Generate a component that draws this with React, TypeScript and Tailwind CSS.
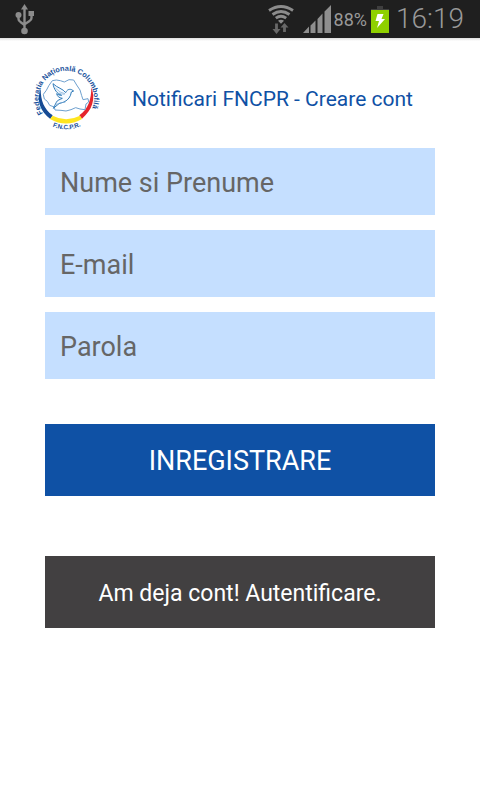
import React from "react";

function UsbIcon() {
  return (
    <svg width="20" height="32" viewBox="0 0 20 32" fill="none" stroke="#8c8c8c" strokeWidth="2.400" aria-hidden="true">
      <path d="M9.500 5v22M3.500 13v3q0 2 2 3l4 3M16.500 11v4q0 2-2 3l-4.500 3" />
      <path d="M9.500 1l3.500 5.500H6z" fill="#8c8c8c" stroke="none" />
      <circle cx="3.500" cy="12" r="3" fill="#8c8c8c" stroke="none" />
      <rect x="13.500" y="8" width="5.500" height="5" fill="#8c8c8c" stroke="none" />
      <circle cx="9.500" cy="28" r="3.300" fill="#8c8c8c" stroke="none" />
    </svg>
  );
}

function WifiIcon() {
  return (
    <svg width="28" height="32" viewBox="0 0 28 32" fill="none" stroke="#8c8c8c" strokeWidth="2.800" aria-hidden="true">
      <path d="M2 7.500q12-8 24 0M5.500 11.500q8.500-6 17 0M8.800 15.200q5.200-3.800 10.400 0" />
      <path d="M11 17.700q3-2 6 0l-3 3z" fill="#8c8c8c" stroke="none" />
      <path d="M9.500 20.500V27M17.500 29v-6" stroke="#686868" strokeWidth="2.800" />
      <path d="M5.500 26h8l-4 5zM13.500 24.500h8l-4-4.500z" fill="#686868" stroke="none" />
    </svg>
  );
}

function SignalIcon() {
  return (
    <svg width="28" height="28" viewBox="0 0 28 28" fill="#8e8e8e" aria-hidden="true">
      <path d="M0 28L6 21.500V28zM7.500 20.500l5-5V28h-5zM14.500 14l5-5.500V28h-5zM21.500 6.500L28 0v28h-6.500z" />
    </svg>
  );
}

function BatteryIcon() {
  return (
    <svg width="18" height="27" viewBox="0 0 18 27" aria-hidden="true">
      <path d="M6 0h6v3h6v2H0V3h6z" fill="#3f3f3f" />
      <path d="M0 4h18v23H0z" fill="#8fd000" />
      <path d="M6.500 8h6l-2 5H14l-8 9 2-7H4.500z" fill="#fff" />
    </svg>
  );
}

function Logo() {
  return (
    <svg width="84" height="84" viewBox="0 0 252 252" role="img" aria-label="Federatia Nationala Columbofila">
      <defs>
        <path id="logo-top" d="M57 172A83 83 0 1 1 197 172" />
        <path id="logo-bottom" d="M64 198A100 100 0 0 0 192 196" />
      </defs>
      <path d="M50 98C36 134 49 165 79 189L86 178C60 159 50 134 50 98z" fill="#164b94" />
      <path d="M202 94C216 130 204 163 174 188L166 178C193 159 202 130 202 94z" fill="#e5252b" />
      <path d="M86 179Q126 200 168 179L174 189Q126 216 78 189z" fill="#ffe51f" />
      <path
        d="M58 115l9-12 8-15 10-14 12-2 12 2 12 4 14-7 14 1 9 15 10 15 5 17 4 12 15-3 2 10-8 6-3 17-15-2-13-4-14 6-15 4-15-2-18-1-2-9-14-5-7-12-9-7-2-9z"
        fill="#fff"
        stroke="#6d9fce"
        strokeWidth="3"
      />
      <path
        d="M87 83c13 13 30 15 38 27 3-8 10-12 18-9l6 4-7 3c-2 14-9 24-22 30l-15 5-17 14 9-18c3-8 12-8 18-12-10-1-16-7-17-14 5 4 10 5 15 5-14-5-23-17-26-35z"
        fill="#f5faff"
        stroke="#307bb9"
        strokeWidth="3"
        strokeLinejoin="round"
      />
      <path d="M94 96q13 15 29 17M104 111q10 4 18 4M93 147l17-7 14-1" fill="none" stroke="#78a9d5" strokeWidth="2" />
      <g fill="#164f9a" fontFamily="'Liberation Sans', Arial, sans-serif" fontWeight="700">
        <text fontSize="22">
          <textPath href="#logo-top">Federatia Națională Columbofilă</textPath>
        </text>
        <text fontSize="19" textAnchor="middle">
          <textPath href="#logo-bottom" startOffset="50%">F.N.C.P.R.</textPath>
        </text>
      </g>
    </svg>
  );
}

function StatusBar() {
  return (
    <div className="flex h-[38px] items-center justify-between bg-[#1f1f1f] pr-4 pl-[15px] text-[#999999]">
      <UsbIcon />
      <div className="flex items-center">
        <WifiIcon />
        <span className="ml-2">
          <SignalIcon />
        </span>
        <span className="ml-[3px] pt-[2px] text-lg">88%</span>
        <span className="ml-1">
          <BatteryIcon />
        </span>
        <span className="ml-[7px] text-[28px] leading-8 font-light">16:19</span>
      </div>
    </div>
  );
}

function Field({ label, type }: { label: string; type: string }) {
  return (
    <input
      type={type}
      aria-label={label}
      placeholder={label}
      className="block h-[67px] w-full bg-[#c5dfff] px-[15px] pt-[3px] text-[27px] text-[#333] outline-none placeholder:text-[#666666] placeholder:opacity-100"
    />
  );
}

export default function App() {
  return (
    <div className="min-h-screen bg-white font-['Roboto','Noto_Sans',sans-serif]">
      <StatusBar />
      <div className="h-[3px] bg-gradient-to-b from-[#dedede] to-white" />
      <header className="flex items-center px-6 pt-[15px]">
        <Logo />
        <h1 className="ml-6 pt-[2px] text-[21px] leading-7 text-[#0f51a5]">Notificari FNCPR - Creare cont</h1>
      </header>
      <form className="px-[45px] pt-2" onSubmit={(e: React.FormEvent) => e.preventDefault()}>
        <div className="flex flex-col gap-[15px]">
          <Field label="Nume si Prenume" type="text" />
          <Field label="E-mail" type="email" />
          <Field label="Parola" type="password" />
        </div>
        <button type="submit" className="mt-[45px] block h-[72px] w-full bg-[#0f51a5] pt-[3px] text-[27px] text-white">
          INREGISTRARE
        </button>
        <button type="button" className="mt-[60px] block h-[72px] w-full bg-[#424041] pt-[5px] text-[23px] text-white">
          Am deja cont! Autentificare.
        </button>
      </form>
    </div>
  );
}
